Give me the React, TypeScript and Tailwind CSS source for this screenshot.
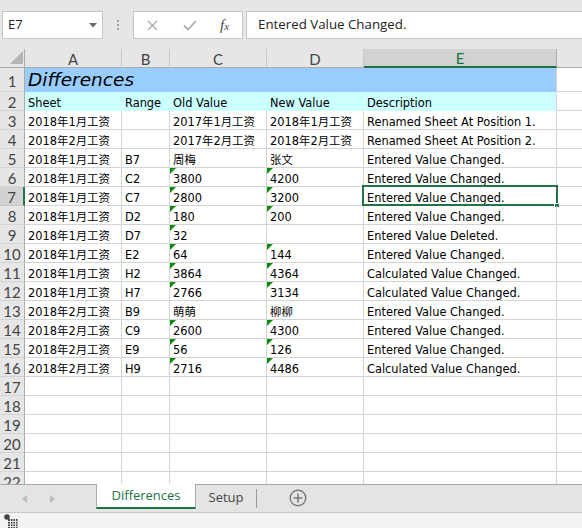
type Row = {
  sheet: string;
  range: string;
  oldVal: string;
  newVal: string;
  desc: string;
  triC: boolean;
  triD: boolean;
};

const rows: Row[] = [
  { sheet: "2018年1月工资", range: "", oldVal: "2017年1月工资", newVal: "2018年1月工资", desc: "Renamed Sheet At Position 1.", triC: false, triD: false },
  { sheet: "2018年2月工资", range: "", oldVal: "2017年2月工资", newVal: "2018年2月工资", desc: "Renamed Sheet At Position 2.", triC: false, triD: false },
  { sheet: "2018年1月工资", range: "B7", oldVal: "周梅", newVal: "张文", desc: "Entered Value Changed.", triC: false, triD: false },
  { sheet: "2018年1月工资", range: "C2", oldVal: "3800", newVal: "4200", desc: "Entered Value Changed.", triC: true, triD: true },
  { sheet: "2018年1月工资", range: "C7", oldVal: "2800", newVal: "3200", desc: "Entered Value Changed.", triC: true, triD: true },
  { sheet: "2018年1月工资", range: "D2", oldVal: "180", newVal: "200", desc: "Entered Value Changed.", triC: true, triD: true },
  { sheet: "2018年1月工资", range: "D7", oldVal: "32", newVal: "", desc: "Entered Value Deleted.", triC: true, triD: false },
  { sheet: "2018年1月工资", range: "E2", oldVal: "64", newVal: "144", desc: "Entered Value Changed.", triC: true, triD: true },
  { sheet: "2018年1月工资", range: "H2", oldVal: "3864", newVal: "4364", desc: "Calculated Value Changed.", triC: true, triD: true },
  { sheet: "2018年1月工资", range: "H7", oldVal: "2766", newVal: "3134", desc: "Calculated Value Changed.", triC: true, triD: true },
  { sheet: "2018年2月工资", range: "B9", oldVal: "萌萌", newVal: "柳柳", desc: "Entered Value Changed.", triC: false, triD: false },
  { sheet: "2018年2月工资", range: "C9", oldVal: "2600", newVal: "4300", desc: "Entered Value Changed.", triC: true, triD: true },
  { sheet: "2018年2月工资", range: "E9", oldVal: "56", newVal: "126", desc: "Entered Value Changed.", triC: true, triD: true },
  { sheet: "2018年2月工资", range: "H9", oldVal: "2716", newVal: "4486", desc: "Calculated Value Changed.", triC: true, triD: true },
];

const cellText =
  "font-['DejaVu_Sans','Noto_Sans_CJK_SC',sans-serif] text-[11.4px] text-black whitespace-nowrap";
const hdrText = "font-['Lato','Liberation_Sans',sans-serif] text-[15px] text-[#444]";

function RowHeader({ n, active }: { n: number; active?: boolean }) {
  return (
    <div
      className={
        active
          ? `h-[19px] border-b border-b-[#c6c6c6] border-r-2 border-r-[#217346] bg-[#d2d2d2] text-center pt-[2px] leading-[16px] ${hdrText}`
          : `h-[19px] border-b border-b-[#d4d4d4] border-r border-r-[#ababab] bg-[#e6e6e6] text-center pt-[2px] leading-[16px] ${hdrText}`
      }
    >
      {n}
    </div>
  );
}

function Cell({ text, tri, children }: { text?: string; tri?: boolean; children?: React.ReactNode }) {
  return (
    <div className={`relative h-[19px] border-b border-r border-[#d4d4d4] pl-[3px] pt-[5px] leading-[13px] ${cellText}`}>
      {tri && (
        <span className="absolute left-0 top-0 w-0 h-0 border-t-[6px] border-r-[6px] border-t-[#0b8a0b] border-r-transparent" />
      )}
      {text}
      {children}
    </div>
  );
}

function Grid() {
  const cols = ["A", "B", "C", "D", "E"];
  return (
    <div className="flex-1 overflow-hidden bg-white">
      <div className="grid grid-cols-[25px_97px_48px_97px_97px_193px_1fr]">
        {/* column headers */}
        <div className="relative h-[19px] border-b border-r border-[#ababab] bg-[#e6e6e6]">
          <svg className="absolute right-[1px] bottom-[3px]" width="13" height="13" viewBox="0 0 13 13">
            <polygon points="13,0 13,13 0,13" fill="#b4b4b4" />
          </svg>
        </div>
        {cols.map((c) =>
          c === "E" ? (
            <div
              key={c}
              className={`h-[19px] border-b-2 border-b-[#217346] border-r border-r-[#ababab] bg-[#d2d2d2] text-center pt-[2px] leading-[15px] ${hdrText} text-[#217346]`}
            >
              {c}
            </div>
          ) : (
            <div
              key={c}
              className={`h-[19px] border-b border-b-[#ababab] border-r border-r-[#c6c6c6] bg-[#e6e6e6] text-center pt-[2px] leading-[16px] ${hdrText}`}
            >
              {c}
            </div>
          )
        )}
        <div className="h-[19px] border-b border-[#ababab] bg-[#e6e6e6]" />

        {/* row 1 */}
        <div
          className={`h-[24px] border-b border-b-[#d4d4d4] border-r border-r-[#ababab] bg-[#e6e6e6] text-center pt-[5px] leading-[16px] ${hdrText}`}
        >
          1
        </div>
        <div className="col-span-5 h-[24px] bg-[#99ccff] border-r border-[#d4d4d4] pl-[3px] font-['DejaVu_Sans',sans-serif] italic text-[18.5px] leading-[24px] text-black">
          Differences
        </div>
        <div className="h-[24px] border-b border-[#d4d4d4]" />

        {/* row 2 */}
        <RowHeader n={2} />
        {["Sheet", "Range", "Old Value", "New Value", "Description"].map((t, i) => (
          <div
            key={t}
            className={`h-[19px] bg-[#ccffff] pt-[5px] leading-[13px] ${i === 4 ? "border-r border-[#d4d4d4] pl-[3px]" : "pl-[3px]"} ${cellText}`}
          >
            {t}
          </div>
        ))}
        <div className="h-[19px] border-b border-[#d4d4d4]" />

        {rows.map((r, i) => {
          const n = i + 3;
          return (
            <div key={n} className="contents">
              <RowHeader n={n} active={n === 7} />
              <Cell text={r.sheet} />
              <Cell text={r.range} />
              <Cell text={r.oldVal} tri={r.triC} />
              <Cell text={r.newVal} tri={r.triD} />
              <Cell text={r.desc}>
                {n === 7 && (
                  <>
                    <span className="absolute left-[-2px] top-[-2px] w-[196px] h-[21px] border-2 border-[#217346]" />
                    <span className="absolute right-[-4px] bottom-[-3px] w-[6px] h-[5px] bg-[#217346] border border-white" />
                  </>
                )}
              </Cell>
              <div className="h-[19px] border-b border-[#d4d4d4]" />
            </div>
          );
        })}

        {[17, 18, 19, 20, 21, 22].map((n) => (
          <div key={n} className="contents">
            <RowHeader n={n} />
            <Cell />
            <Cell />
            <Cell />
            <Cell />
            <Cell />
            <div className="h-[19px] border-b border-[#d4d4d4]" />
          </div>
        ))}
      </div>
    </div>
  );
}

function FormulaBar() {
  return (
    <div className="h-[49px] shrink-0 flex items-start pt-[11px] bg-[#e6e6e6]">
      <div className="ml-[2px] w-[101px] h-[28px] bg-white border border-[#c6c6c6] flex items-center justify-between pl-[5px] pr-[5px]">
        <span className="font-['Open_Sans',sans-serif] text-[13px] text-[#222]">E7</span>
        <svg width="8" height="5" viewBox="0 0 8 5">
          <polygon points="0,0 8,0 4,4.5" fill="#6a6a6a" />
        </svg>
      </div>
      <div className="w-[30px] h-[28px] flex flex-col items-center justify-center gap-[2px]">
        <span className="w-[2px] h-[2px] bg-[#a0a0a0]" />
        <span className="w-[2px] h-[2px] bg-[#a0a0a0]" />
        <span className="w-[2px] h-[2px] bg-[#a0a0a0]" />
      </div>
      <div className="w-[110px] h-[28px] bg-white border border-[#c6c6c6] flex items-center">
        <svg className="ml-[13px]" width="11" height="11" viewBox="0 0 11 11">
          <path d="M1 1 L10 10 M10 1 L1 10" stroke="#ababab" strokeWidth="1.3" />
        </svg>
        <svg className="ml-[25px]" width="14" height="11" viewBox="0 0 14 11">
          <path d="M1 5.5 L5 9.5 L13 1" stroke="#ababab" strokeWidth="1.8" fill="none" />
        </svg>
        <span className="ml-[23px] font-['Liberation_Serif',serif] italic text-[15px] text-[#444] leading-none">
          f<span className="text-[11px]">x</span>
        </span>
      </div>
      <div className="ml-[3px] flex-1 h-[28px] bg-white border border-r-0 border-[#c6c6c6] flex items-center pl-[11px]">
        <span className="font-['Open_Sans',sans-serif] text-[13.3px] text-[#222] whitespace-nowrap">
          Entered Value Changed.
        </span>
      </div>
    </div>
  );
}

function TabBar() {
  return (
    <div className="h-[29px] shrink-0 flex items-start border-t border-t-[#a6a6a6] border-b border-b-[#c6c6c6] bg-[#e4e4e4]">
      <div className="w-[96px] h-[27px] flex items-center">
        <svg className="ml-[22px]" width="5" height="8" viewBox="0 0 5 8">
          <polygon points="5,0 5,8 0,4" fill="#bdbdbd" />
        </svg>
        <svg className="ml-[23px]" width="5" height="8" viewBox="0 0 5 8">
          <polygon points="0,0 0,8 5,4" fill="#bdbdbd" />
        </svg>
      </div>
      <div className="-mt-px w-[100px] h-[25px] bg-white border-l border-r border-[#ababab] border-b-2 border-b-[#217346] flex items-center justify-center pt-[1px] font-['Open_Sans',sans-serif] text-[13px] text-[#217346]">
        Differences
      </div>
      <div className="w-[60px] h-[26px] flex items-center justify-center font-['Open_Sans',sans-serif] text-[13px] text-[#444]">
        Setup
      </div>
      <div className="mt-[4px] w-px h-[19px] bg-[#9a9a9a]" />
      <div className="ml-[32px] h-[26px] flex items-center">
        <svg width="18" height="18" viewBox="0 0 18 18">
          <circle cx="9" cy="9" r="7.8" fill="none" stroke="#7a7a7a" strokeWidth="1.4" />
          <path d="M9 4.5 V13.5 M4.5 9 H13.5" stroke="#7a7a7a" strokeWidth="1.6" />
        </svg>
      </div>
    </div>
  );
}

function StatusBar() {
  return (
    <div className="flex-1 bg-[#f3f3f3] flex items-end pl-[4px]">
      <svg width="14" height="14" viewBox="0 0 14 14">
        <circle cx="3" cy="3" r="2.8" fill="#444" />
        <rect x="4" y="5" width="9.5" height="9" fill="#444" />
        <path d="M6.5 5 V14 M9 5 V14 M11.5 5 V14 M4 7.5 H13.5 M4 10 H13.5 M4 12.5 H13.5" stroke="#f3f3f3" strokeWidth="0.9" />
      </svg>
    </div>
  );
}

export default function App() {
  return (
    <div className="w-[582px] h-[528px] flex flex-col overflow-hidden bg-[#e6e6e6]">
      <FormulaBar />
      <div className="h-[435px] shrink-0 overflow-hidden flex flex-col">
        <Grid />
      </div>
      <TabBar />
      <StatusBar />
    </div>
  );
}
